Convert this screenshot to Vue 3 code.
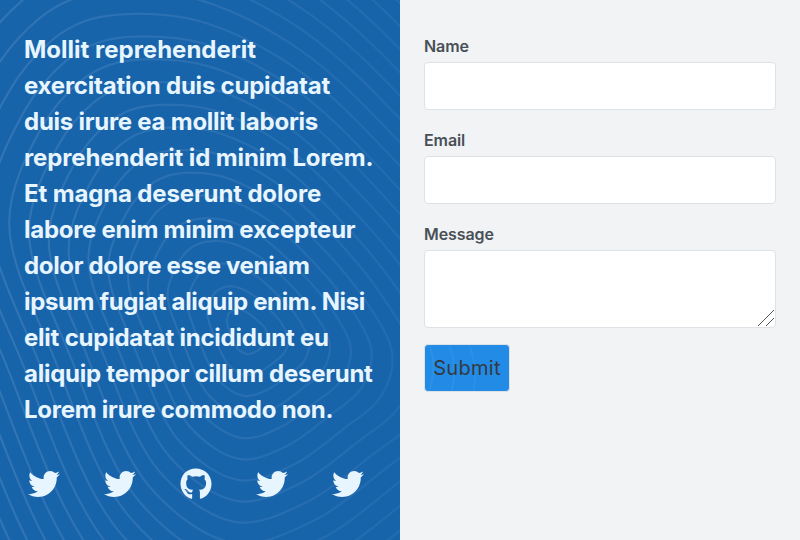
<script setup>
import { ref } from 'vue'

const lines = [
  { text: 'Mollit reprehenderit', track: 0 },
  { text: 'exercitation duis cupidatat', track: -0.22 },
  { text: 'duis irure ea mollit laboris', track: -0.25 },
  { text: 'reprehenderit id minim Lorem.', track: -0.13 },
  { text: 'Et magna deserunt dolore', track: -0.14 },
  { text: 'labore enim minim excepteur', track: -0.27 },
  { text: 'dolor dolore esse veniam', track: -0.33 },
  { text: 'ipsum fugiat aliquip enim. Nisi', track: -0.35 },
  { text: 'elit cupidatat incididunt eu', track: -0.23 },
  { text: 'aliquip tempor cillum deserunt', track: -0.25 },
  { text: 'Lorem irure commodo non.', track: -0.25 },
]

const twitter = { box: '0 0 512 512', d: 'M459.37 151.716c.325 4.548.325 9.097.325 13.645 0 138.72-105.583 298.558-298.558 298.558-59.452 0-114.68-17.219-161.137-47.106 8.447.974 16.568 1.299 25.34 1.299 49.055 0 94.213-16.568 130.274-44.832-46.132-.975-84.792-31.188-98.112-72.772 6.498.974 12.995 1.624 19.818 1.624 9.421 0 18.843-1.3 27.614-3.573-48.081-9.747-84.143-51.98-84.143-102.985v-1.299c13.969 7.797 30.214 12.67 47.431 13.319-28.264-18.843-46.781-51.005-46.781-87.391 0-19.492 5.197-37.36 14.294-52.954 51.655 63.675 129.3 105.258 216.365 109.807-1.624-7.797-2.599-15.918-2.599-24.04 0-57.828 46.782-104.934 104.934-104.934 30.213 0 57.502 12.67 76.67 33.137 23.715-4.548 46.456-13.32 66.599-25.34-7.798 24.366-24.366 44.833-46.132 57.827 21.117-2.273 41.584-8.122 60.426-16.243-14.292 20.791-32.161 39.308-52.628 54.253z' }
const github = { box: '0 0 496 512', d: 'M165.9 397.4c0 2-2.3 3.6-5.2 3.6-3.3.3-5.6-1.3-5.6-3.6 0-2 2.3-3.6 5.2-3.6 3-.3 5.6 1.3 5.6 3.6zm-31.1-4.5c-.7 2 1.3 4.3 4.3 4.9 2.6 1 5.6 0 6.2-2s-1.3-4.3-4.3-5.2c-2.6-.7-5.5.3-6.2 2.3zm44.2-1.7c-2.9.7-4.9 2.6-4.6 4.9.3 2 2.9 3.3 5.9 2.6 2.9-.7 4.9-2.6 4.6-4.6-.3-1.9-3-3.2-5.9-2.9zM244.8 8C106.1 8 0 113.3 0 252c0 110.9 69.8 205.8 169.5 239.2 12.8 2.3 17.3-5.6 17.3-12.1 0-6.2-.3-40.4-.3-61.4 0 0-70 15-84.7-29.8 0 0-11.4-29.1-27.8-36.6 0 0-22.9-15.7 1.6-15.4 0 0 24.9 2 38.6 25.8 21.9 38.6 58.6 27.5 72.9 20.9 2.3-16 8.8-27.1 16-33.7-55.9-6.2-112.3-14.3-112.3-110.5 0-27.5 7.6-41.3 23.6-58.9-2.6-6.5-11.1-33.3 2.6-67.9 20.9-6.5 69 27 69 27 20-5.6 41.5-8.5 62.8-8.5s42.8 2.9 62.8 8.5c0 0 48.1-33.6 69-27 13.7 34.7 5.2 61.4 2.6 67.9 16 17.7 25.8 31.5 25.8 58.9 0 96.5-58.9 104.2-114.8 110.5 9.2 7.9 17 22.9 17 46.4 0 33.7-.3 75.4-.3 83.6 0 6.5 4.6 14.4 17.3 12.1C428.2 457.8 496 362.9 496 252 496 113.3 383.5 8 244.8 8zM97.2 352.9c-1.3 1-1 3.3.7 5.2 1.6 1.6 3.9 2.3 5.2 1 1.3-1 1-3.3-.7-5.2-1.6-1.6-3.9-2.3-5.2-1zm-10.8-8.1c-.7 1.3.3 2.9 2.3 3.9 1.6 1 3.6.7 4.3-.7.7-1.3-.3-2.9-2.3-3.9-2-.6-3.6-.3-4.3.7zm32.4 35.6c-1.6 1.3-1 4.3 1.3 6.2 2.3 2.3 5.2 2.6 6.5 1 1.3-1.3.7-4.3-1.3-6.2-2.2-2.3-5.2-2.6-6.5-1zm-11.4-14.7c-1.6 1-1.6 3.6 0 5.9 1.6 2.3 4.3 3.3 5.6 2.3 1.6-1.3 1.6-3.9 0-6.2-1.4-2.3-4-3.3-5.6-2z' }
const icons = [twitter, twitter, github, twitter, twitter]

// Contour anchors: start x, start y, growth per ring x, growth per ring y
const anchors = [
  [238, 309, -8.3, -22.7],
  [242, 310, -3.2, -22.2],
  [248, 313, 3.7, -18.8],
  [259, 322, 10, -12.9],
  [265, 328, 16.3, -5.2],
  [267.5, 336, 20.8, 3],
  [265, 344, 19.3, 8.8],
  [260, 349, 13.8, 13.4],
  [254, 352.5, 6.4, 18.8],
  [247, 354, -1.4, 21],
  [238, 349, -9.75, 15.4],
  [231, 336, -16, 2.2],
  [227, 322, -19.8, -9.1],
  [227.5, 317, -16.9, -17.2],
  [229, 313, -13.6, -21],
  [233, 310.5, -11.3, -22.3],
]

// Closed centripetal spline through the anchors of ring k
function ring(k) {
  const p = anchors.map(([x, y, dx, dy]) => [x + dx * k, y + dy * k])
  const n = p.length
  const gap = (u, v) => Math.sqrt(Math.hypot(u[0] - v[0], u[1] - v[1]))
  let d = `M${p[0]}`
  for (let i = 0; i < n; i++) {
    const a = p[(i + n - 1) % n], b = p[i], c = p[(i + 1) % n], e = p[(i + 2) % n]
    const r = gap(a, b), s = gap(b, c), t = gap(c, e)
    const c1 = [0, 1].map(j => (r * r * c[j] - s * s * a[j] + (2 * r * r + 3 * r * s + s * s) * b[j]) / (3 * r * (r + s)))
    const c2 = [0, 1].map(j => (t * t * b[j] - s * s * e[j] + (2 * t * t + 3 * t * s + s * s) * c[j]) / (3 * t * (t + s)))
    d += `C${c1} ${c2} ${c}`
  }
  return d + 'Z'
}
const rings = Array.from({ length: 32 }, (_, k) => ring(k))

const name = ref('')
const email = ref('')
const message = ref('')
</script>

<template>
  <main class="page">
    <section class="intro">
      <svg class="contours" viewBox="0 0 400 540" fill="none" aria-hidden="true">
        <defs>
          <linearGradient id="fade" gradientUnits="userSpaceOnUse" x1="0" y1="0" x2="400" y2="0">
            <stop offset="0" stop-color="#fff" stop-opacity=".11" />
            <stop offset="1" stop-color="#fff" stop-opacity=".05" />
          </linearGradient>
        </defs>
        <path v-for="(d, i) in rings" :key="i" :d="d" stroke="url(#fade)" stroke-width="2" />
      </svg>
      <h1 class="heading">
        <span v-for="l in lines" :key="l.text" class="line" :style="{ letterSpacing: l.track + 'px' }">{{ l.text }}</span>
      </h1>
      <div class="social">
        <a v-for="(icon, i) in icons" :key="i" class="icon">
          <svg :viewBox="icon.box" width="32" height="32" fill="currentColor"><path :d="icon.d" /></svg>
        </a>
      </div>
    </section>
    <form class="form" @submit.prevent>
      <label class="field"><span class="label">Name</span><input v-model="name" class="control" type="text" /></label>
      <label class="field"><span class="label">Email</span><input v-model="email" class="control" type="email" /></label>
      <label class="field">
        <span class="label">Message</span>
        <textarea v-model="message" class="control area"></textarea>
        <svg class="grip" viewBox="0 0 16 16" aria-hidden="true"><path d="M0 16l16-16M8 16l8-8" stroke="#555" /></svg>
      </label>
      <button class="submit" type="submit">
        <svg class="waves" viewBox="426 346 84 46" fill="none" aria-hidden="true">
          <path v-for="(d, i) in rings.slice(8, 11)" :key="i" :d="d" stroke="#fff" stroke-opacity=".05" stroke-width="2" />
        </svg>
        <span class="caption">Submit</span>
      </button>
    </form>
  </main>
</template>

<style>
body {
  margin: 0;
}
</style>

<style scoped>
.page {
  display: grid;
  grid-template-columns: 1fr 1fr;
  height: 540px;
  overflow: hidden;
  background: #f1f3f5;
  font-family: Inter, "Liberation Sans", sans-serif;
}
.intro {
  position: relative;
  box-sizing: border-box;
  padding: 32px 24px;
  background: #1864ab;
  color: #e7f5ff;
  overflow: hidden;
}
.contours {
  position: absolute;
  inset: 0;
  width: 400px;
  height: 540px;
}
.heading {
  position: relative;
  margin: 0;
  font-size: 24px;
  font-weight: 700;
  line-height: 36px;
}
.line {
  display: block;
  white-space: nowrap;
}
.social {
  position: relative;
  display: flex;
  gap: 36px;
  margin-top: 36px;
}
.icon {
  display: flex;
  width: 40px;
  height: 40px;
  align-items: center;
  justify-content: center;
}
.form {
  display: flex;
  flex-direction: column;
  align-items: flex-start;
  box-sizing: border-box;
  padding: 34px 24px;
}
.field {
  position: relative;
  display: flex;
  flex-direction: column;
  width: 100%;
  margin-bottom: 18px;
}
.label {
  height: 28px;
  color: #495057;
  font-size: 16px;
  font-weight: 600;
  letter-spacing: -0.1px;
  line-height: 24px;
}
.control {
  box-sizing: border-box;
  width: 100%;
  height: 48px;
  padding: 8px;
  border: 1px solid #dee2e6;
  border-radius: 4px;
  background: #fff;
  font: inherit;
  outline: none;
}
.area {
  height: 78px;
  resize: none;
}
.grip {
  position: absolute;
  right: 2px;
  bottom: 2px;
  width: 16px;
  height: 16px;
}
.submit {
  position: relative;
  width: 86px;
  height: 48px;
  margin-top: -2px;
  padding: 0;
  border: 1px solid #dee2e6;
  border-radius: 4px;
  background: #228be6;
  overflow: hidden;
  color: #343a40;
  font-family: inherit;
  font-size: 20px;
  letter-spacing: 0.3px;
}
.waves {
  position: absolute;
  inset: 0;
  width: 100%;
  height: 100%;
}
.caption {
  position: relative;
}
</style>
